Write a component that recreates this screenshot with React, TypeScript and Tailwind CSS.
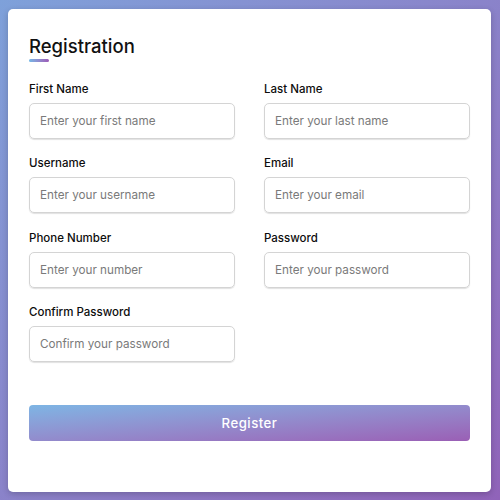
import React from 'react';

type Field = {
  label: string;
  placeholder: string;
  type: string;
};

const fields: Field[] = [
  { label: 'First Name', placeholder: 'Enter your first name', type: 'text' },
  { label: 'Last Name', placeholder: 'Enter your last name', type: 'text' },
  { label: 'Username', placeholder: 'Enter your username', type: 'text' },
  { label: 'Email', placeholder: 'Enter your email', type: 'email' },
  { label: 'Phone Number', placeholder: 'Enter your number', type: 'text' },
  { label: 'Password', placeholder: 'Enter your password', type: 'password' },
  { label: 'Confirm Password', placeholder: 'Confirm your password', type: 'password' },
];

const App: React.FC = () => {
  return (
    <div
      className="w-[500px] h-[500px] flex pt-[9px] pl-[8px] pr-[9px] pb-[8px] bg-gradient-to-br from-[#7ea1da] to-[#9063b9]"
      style={{ fontFamily: 'Inter, "Open Sans", sans-serif' }}
    >
      <div className="flex-1 flex flex-col bg-white rounded-[5px] shadow-[0_2px_6px_rgba(0,0,0,0.2)] px-[21px] pt-[25px]">
        {/* Title */}
        <div className="text-[18.5px] leading-[24px] font-medium text-[#111]">Registration</div>
        <div className="mt-[1px] h-[3px] w-[20px] rounded-[2px] bg-gradient-to-r from-[#71b7e6] to-[#9b59b6]" />

        {/* Form grid */}
        <div className="mt-[18px] grid grid-cols-2 gap-x-[29px] gap-y-[15.4px]">
          {fields.map((f) => (
            <div key={f.label} className="flex flex-col">
              <label className="text-[11.5px] leading-[18px] font-medium text-[#0d0d0d] mb-[5px]">{f.label}</label>
              <input
                type={f.type}
                placeholder={f.placeholder}
                className="h-[36px] w-full rounded-[5px] border border-[#d4d4d4] shadow-[0_1px_1px_rgba(0,0,0,0.12)] px-[10px] text-[11.7px] text-[#333] placeholder:text-[#7a7a7a] outline-none"
              />
            </div>
          ))}
        </div>

        {/* Button */}
        <button className="mt-[43px] h-[36px] w-full pt-[2px] rounded-[4px] bg-gradient-to-br from-[#7db5e4] to-[#9a5fb5] text-white text-[13.2px] font-medium tracking-[0.5px]">
          Register
        </button>
      </div>
    </div>
  );
};

export default App;
